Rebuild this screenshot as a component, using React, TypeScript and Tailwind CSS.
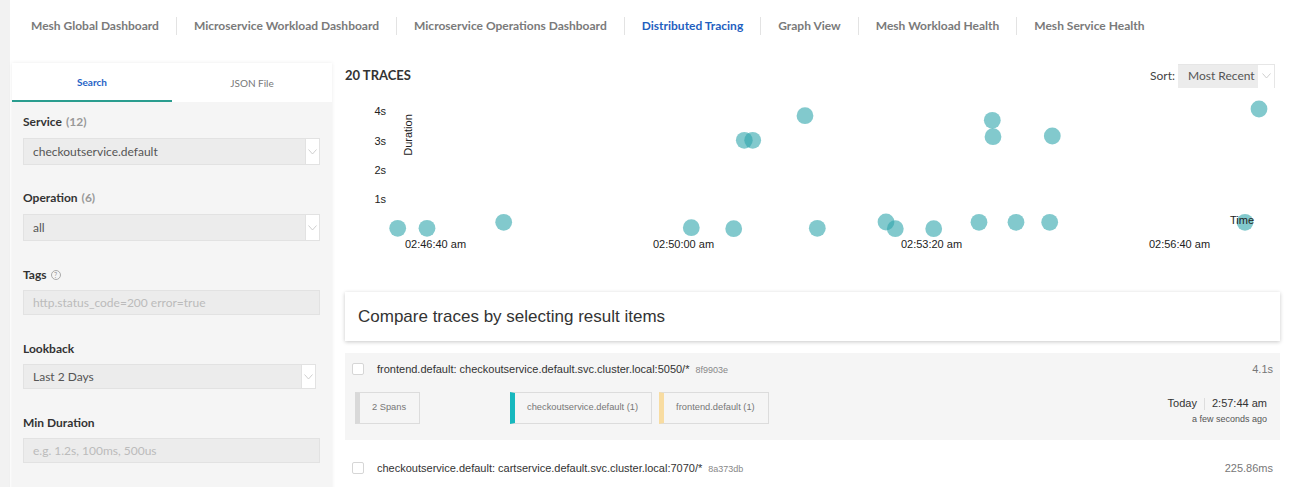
import { useState } from "react";

const navItems = [
  "Mesh Global Dashboard",
  "Microservice Workload Dashboard",
  "Microservice Operations Dashboard",
  "Distributed Tracing",
  "Graph View",
  "Mesh Workload Health",
  "Mesh Service Health",
];

// [x, y] in page coordinates, the chart svg uses the same origin
const dots: [number, number][] = [
  [397.7, 228.3],
  [427, 228.3],
  [503.7, 222.3],
  [691.3, 227.7],
  [733.7, 228.7],
  [744.3, 140.3],
  [752.7, 140.3],
  [805, 115.7],
  [817.3, 228.3],
  [886, 222],
  [895.3, 228.7],
  [933.7, 228.7],
  [979, 222.3],
  [992.3, 120.3],
  [993, 136.7],
  [1016, 222.3],
  [1049.7, 222.3],
  [1052.3, 136],
  [1245, 222.3],
  [1259, 109],
];

function Chevron() {
  return (
    <svg width="9" height="6" viewBox="0 0 9 6" fill="none">
      <polyline points="0.5,0.5 4.5,5 8.5,0.5" stroke="#c8c8c8" strokeWidth="0.9" />
    </svg>
  );
}

function SelectBox({ value }: { value: string }) {
  return (
    <div className="flex h-full w-full border border-[#e2e2e2] bg-[#ececec]">
      <div className="flex flex-1 items-center pl-[9px] text-[12px] text-[#555]">{value}</div>
      <div className="flex w-[14px] items-center justify-center border-l border-[#e2e2e2] bg-white">
        <Chevron />
      </div>
    </div>
  );
}

function Label({ text, count }: { text: string; count?: string }) {
  return (
    <div className="flex h-[16px] items-center text-[12px] font-bold text-[#333]">
      {text}
      {count && <span className="ml-[4px] text-[#999]">{count}</span>}
    </div>
  );
}

function Sidebar() {
  const [tab, setTab] = useState("search");
  return (
    <div className="ml-[2px] w-[320px] shrink-0 bg-[#f5f5f5] pb-8 shadow-[0_0_4px_rgba(0,0,0,0.08)]">
      <div className="flex h-[39px] bg-white">
        <button
          onClick={() => setTab("search")}
          className={
            tab === "search"
              ? "flex-1 border-b-2 border-[#2a9d8f] pt-[2px] text-[10px] font-bold text-[#1f63c6]"
              : "flex-1 pt-[2px] text-[10px] text-[#777]"
          }
        >
          Search
        </button>
        <button
          onClick={() => setTab("json")}
          className={
            tab === "json"
              ? "flex-1 border-b-2 border-[#2a9d8f] pt-[2px] text-[10px] font-bold text-[#1f63c6]"
              : "flex-1 pt-[2px] text-[10px] text-[#777]"
          }
        >
          JSON File
        </button>
      </div>
      <div className="pl-[11px] pr-[12px]">
        <div className="mt-[12px]">
          <Label text="Service" count="(12)" />
        </div>
        <div className="mt-[8px] h-[27px]">
          <SelectBox value="checkoutservice.default" />
        </div>

        <div className="mt-[25px]">
          <Label text="Operation" count="(6)" />
        </div>
        <div className="mt-[8px] h-[27px]">
          <SelectBox value="all" />
        </div>

        <div className="mt-[26px] flex items-center">
          <Label text="Tags" />
          <span className="ml-[4px] flex h-[10px] w-[10px] items-center justify-center rounded-full border border-[#aaa] text-[7px] leading-none text-[#999]">
            ?
          </span>
        </div>
        <div className="mt-[7px] flex h-[25px] items-center border border-[#e2e2e2] bg-[#ececec] pl-[9px] text-[12px] text-[#bbb]">
          http.status_code=200 error=true
        </div>

        <div className="mt-[26px]">
          <Label text="Lookback" />
        </div>
        <div className="mt-[7px] h-[25px] pr-[4px]">
          <SelectBox value="Last 2 Days" />
        </div>

        <div className="mt-[26px]">
          <Label text="Min Duration" />
        </div>
        <div className="mt-[7px] flex h-[25px] items-center border border-[#e2e2e2] bg-[#ececec] pl-[9px] text-[12px] text-[#bbb]">
          e.g. 1.2s, 100ms, 500us
        </div>
      </div>
    </div>
  );
}

function Chart() {
  const axis = { fontFamily: "'Liberation Sans', Arial, sans-serif", fontSize: 11, fill: "#222" };
  return (
    <svg width="935" height="170" viewBox="345 92 935 170" className="block">
      {[
        ["4s", 111],
        ["3s", 141],
        ["2s", 170],
        ["1s", 199],
      ].map(([t, y]) => (
        <text key={t} x={386} y={Number(y)} textAnchor="end" dominantBaseline="central" style={axis}>
          {t}
        </text>
      ))}
      <text
        x={408}
        y={135}
        textAnchor="middle"
        dominantBaseline="central"
        transform="rotate(-90 408 135)"
        style={axis}
      >
        Duration
      </text>
      {[
        ["02:46:40 am", 435.5],
        ["02:50:00 am", 683.5],
        ["02:53:20 am", 931.5],
        ["02:56:40 am", 1179.5],
      ].map(([t, x]) => (
        <text key={t} x={Number(x)} y={244} textAnchor="middle" dominantBaseline="central" style={axis}>
          {t}
        </text>
      ))}
      {dots.map(([x, y], i) => (
        <circle key={i} cx={x} cy={y} r={8.4} fill="#2fa5ab" fillOpacity={0.6} />
      ))}
      <text x={1230} y={220} dominantBaseline="central" style={axis}>
        Time
      </text>
    </svg>
  );
}

function Checkbox() {
  return <div className="h-[12px] w-[12px] shrink-0 rounded-[2px] border border-[#d6d6d6] bg-white" />;
}

function SpanTag({ text, color, className }: { text: string; color: string; className?: string }) {
  return (
    <div
      className={
        "flex h-[32px] items-center whitespace-nowrap border border-[#dcdcdc] border-l-[5px] pl-[12px] pr-[13px] text-[9.3px] text-[#777] " +
        (className ?? "")
      }
      style={{ borderLeftColor: color }}
    >
      {text}
    </div>
  );
}

function Main() {
  return (
    <div className="min-w-0 flex-1 pl-[13px] pr-[13px] font-['Liberation_Sans',Arial,sans-serif]">
      <div className="flex h-[25px] items-center justify-between pr-[5px]">
        <div className="font-['Lato',sans-serif] text-[13px] font-bold text-[#333]">20 TRACES</div>
        <div className="flex h-[24px] items-center font-['Lato',sans-serif]">
          <span className="mr-[3px] text-[12px] text-[#444]">Sort:</span>
          <div className="flex h-full w-[97px] border-t border-r border-[#e6e6e6]">
            <div className="flex flex-1 items-center bg-[#ececec] pl-[10px] text-[12px] text-[#555]">
              Most Recent
            </div>
            <div className="flex w-[16px] items-center justify-center bg-white">
              <Chevron />
            </div>
          </div>
        </div>
      </div>

      <div className="mt-[4px]">
        <Chart />
      </div>

      <div className="mt-[30px] flex h-[49px] items-center bg-white pl-[13px] text-[17px] text-[#333] shadow-[0_1px_4px_rgba(0,0,0,0.22)]">
        Compare traces by selecting result items
      </div>

      <div className="mt-[12px] bg-[#f5f5f5] pb-[15px] pl-[7px] pr-[7px] pt-[10px]">
        <div className="flex h-[12px] items-center">
          <Checkbox />
          <div className="ml-[13px] flex-1 text-[11px] text-[#333]">
            frontend.default: checkoutservice.default.svc.cluster.local:5050/*
            <span className="ml-[6px] text-[9px] text-[#888]">8f9903e</span>
          </div>
          <div className="text-[11px] text-[#777]">4.1s</div>
        </div>
        <div className="mt-[17px] flex items-start pl-[3px] pr-[6px]">
          <div className="w-[155px]">
            <SpanTag text="2 Spans" color="#d9d9d9" className="w-fit pl-[11px]" />
          </div>
          <SpanTag text="checkoutservice.default (1)" color="#17b8be" />
          <SpanTag text="frontend.default (1)" color="#f8dca1" className="ml-[7px]" />
          <div className="ml-auto flex flex-col items-end pt-[5px]">
            <div className="flex h-[13px] items-center text-[11px] leading-[13px] text-[#333]">
              Today
              <span className="mx-[7px] h-[12px] w-px bg-[#ddd]" />
              2:57:44 am
            </div>
            <div className="mt-[4px] text-[9px] leading-[11px] text-[#555]">a few seconds ago</div>
          </div>
        </div>
      </div>

      <div className="mt-[9px] pl-[7px] pr-[7px] pt-[13px]">
        <div className="flex h-[12px] items-center">
          <Checkbox />
          <div className="ml-[13px] flex-1 text-[11px] text-[#333]">
            checkoutservice.default: cartservice.default.svc.cluster.local:7070/*
            <span className="ml-[6px] text-[9px] text-[#888]">8a373db</span>
          </div>
          <div className="text-[11px] text-[#777]">225.86ms</div>
        </div>
      </div>
    </div>
  );
}

export default function App() {
  return (
    <div className="flex min-h-screen bg-[#f2f2f2] font-['Lato',sans-serif]">
      <div className="ml-[10px] flex-1 bg-white">
        <div className="flex h-[52px] items-center pl-[4px]">
          {navItems.map((item, i) => (
            <div key={item} className="flex items-center">
              {i > 0 && <div className="h-[18px] w-px bg-[#e3e3e3]" />}
              <div
                className={
                  "px-[17px] text-[12px] font-bold " +
                  (item === "Distributed Tracing" ? "text-[#1f5fbf]" : "text-[#7a7a7a]")
                }
              >
                {item}
              </div>
            </div>
          ))}
        </div>
        <div className="mt-[11px] flex">
          <Sidebar />
          <Main />
        </div>
      </div>
    </div>
  );
}
